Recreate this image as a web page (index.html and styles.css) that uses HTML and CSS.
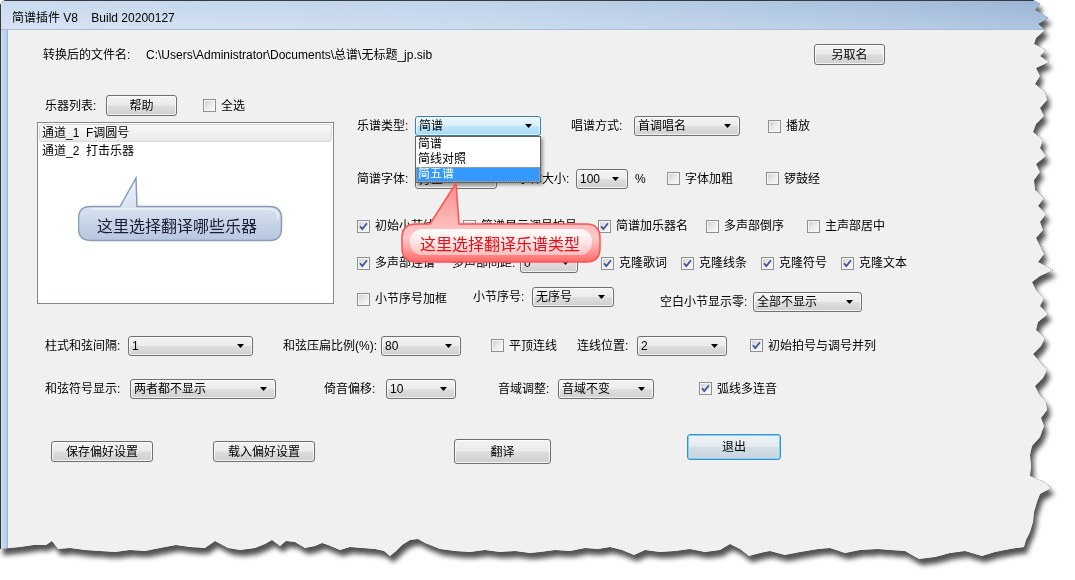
FILE: index.html
```html
<!DOCTYPE html>
<html lang="zh-CN">
<head>
<meta charset="utf-8">
<title>简谱插件 V8</title>
<link rel="stylesheet" href="styles.css">
</head>
<body>
<div class="shot">
 <div class="win">
  <div class="titlebar"><span class="title">简谱插件 V8    Build 20200127</span></div>
  <div class="winbody">
   <div class="frame-l"></div>
   <div class="client">

    <div class="row row-file">
     <span class="lbl w103">转换后的文件名:</span>
     <span class="path w668">C:\Users\Administrator\Documents\总谱\无标题_jp.sib</span>
     <div class="btn w71 h21">另取名</div>
    </div>

    <div class="main">
     <div class="left">
      <div class="row row-inst">
       <span class="lbl w61">乐器列表:</span>
       <div class="btn w71 h21">帮助</div>
       <div class="ck ml26"><span class="box"></span><span class="ckl">全选</span></div>
      </div>
      <div class="listbox">
       <div class="li sel">通道_1  F调圆号</div>
       <div class="li">通道_2  打击乐器</div>
       <div class="callout callout-blue">
        <svg width="214" height="74" viewBox="0 0 214 74">
         <defs>
          <linearGradient id="gb" x1="0" y1="0" x2="0" y2="1">
           <stop offset="0" stop-color="#f1f5fb"/>
           <stop offset="0.45" stop-color="#d9e3f1"/>
           <stop offset="1" stop-color="#b6c6dd"/>
          </linearGradient>
         </defs>
         <path d="M12.5 30.5 L42 30.5 L58 2 L59 30.5 L191.5 30.5 Q203.5 30.5 203.5 42.5 L203.5 52.5 Q203.5 64.5 191.5 64.5 L12.5 64.5 Q0.5 64.5 0.5 52.5 L0.5 42.5 Q0.5 30.5 12.5 30.5 Z" fill="url(#gb)" stroke="#8a9cba" stroke-width="1.5"/>
         <path d="M13 33 L190 33 Q200.5 33 200.5 43" fill="none" stroke="#ffffff" stroke-opacity="0.8" stroke-width="1.2"/>
        </svg>
        <span class="co-text co-text-blue">这里选择翻译哪些乐器</span>
       </div>
      </div>
     </div>

     <div class="right">
      <div class="row r1">
       <span class="lbl w58">乐谱类型:</span>
       <div class="combo focus w126"><span class="cv">简谱</span><svg class="arr" width="7" height="4" viewBox="0 0 7 4"><path d="M0 0H7L3.5 4Z"/></svg>
        <div class="dropdown">
         <div class="dd-item">简谱</div>
         <div class="dd-item">简线对照</div>
         <div class="dd-item hl">简五谱</div>
        </div>
       </div>
       <span class="lbl ml30 w63">唱谱方式:</span>
       <div class="combo w106"><span class="cv">首调唱名</span><svg class="arr" width="7" height="4" viewBox="0 0 7 4"><path d="M0 0H7L3.5 4Z"/></svg></div>
       <div class="ck ml28"><span class="box"></span><span class="ckl">播放</span></div>
      </div>

      <div class="row r2">
       <span class="lbl w58">简谱字体:</span>
       <div class="combo w82 h21"><span class="cv cv-low">方正</span><svg class="arr" width="7" height="4" viewBox="0 0 7 4"><path d="M0 0H7L3.5 4Z"/></svg></div>
       <span class="lbl ml21 w58">字体大小:</span>
       <div class="combo w52"><span class="cv">100</span><svg class="arr" width="7" height="4" viewBox="0 0 7 4"><path d="M0 0H7L3.5 4Z"/></svg></div>
       <span class="lbl ml7 w32">%</span>
       <div class="ck w99"><span class="box"></span><span class="ckl">字体加粗</span></div>
       <div class="ck"><span class="box"></span><span class="ckl">锣鼓经</span></div>
      </div>

      <div class="row r3">
       <div class="ck w106"><span class="box"><svg width="11" height="11" viewBox="0 0 11 11"><path d="M2 5.2 L4.3 8 L9 2.3" class="tick"/></svg></span><span class="ckl">初始小节线</span></div>
       <div class="ck w135"><span class="box"><svg width="11" height="11" viewBox="0 0 11 11"><path d="M2 5.2 L4.3 8 L9 2.3" class="tick"/></svg></span><span class="ckl">简谱显示调号拍号</span></div>
       <div class="ck w108"><span class="box"><svg width="11" height="11" viewBox="0 0 11 11"><path d="M2 5.2 L4.3 8 L9 2.3" class="tick"/></svg></span><span class="ckl">简谱加乐器名</span></div>
       <div class="ck w101"><span class="box"></span><span class="ckl">多声部倒序</span></div>
       <div class="ck"><span class="box"></span><span class="ckl">主声部居中</span></div>
      </div>

      <div class="row r4">
       <div class="ck w95"><span class="box"><svg width="11" height="11" viewBox="0 0 11 11"><path d="M2 5.2 L4.3 8 L9 2.3" class="tick"/></svg></span><span class="ckl">多声部连谱</span></div>
       <span class="lbl w68">多声部间距:</span>
       <div class="combo w58"><span class="cv">0</span><svg class="arr" width="7" height="4" viewBox="0 0 7 4"><path d="M0 0H7L3.5 4Z"/></svg></div>
       <div class="ck ml23 w80"><span class="box"><svg width="11" height="11" viewBox="0 0 11 11"><path d="M2 5.2 L4.3 8 L9 2.3" class="tick"/></svg></span><span class="ckl">克隆歌词</span></div>
       <div class="ck w80"><span class="box"><svg width="11" height="11" viewBox="0 0 11 11"><path d="M2 5.2 L4.3 8 L9 2.3" class="tick"/></svg></span><span class="ckl">克隆线条</span></div>
       <div class="ck w80"><span class="box"><svg width="11" height="11" viewBox="0 0 11 11"><path d="M2 5.2 L4.3 8 L9 2.3" class="tick"/></svg></span><span class="ckl">克隆符号</span></div>
       <div class="ck"><span class="box"><svg width="11" height="11" viewBox="0 0 11 11"><path d="M2 5.2 L4.3 8 L9 2.3" class="tick"/></svg></span><span class="ckl">克隆文本</span></div>
      </div>

      <div class="row r5">
       <div class="ck w116 mt4"><span class="box"></span><span class="ckl">小节序号加框</span></div>
       <span class="lbl w59">小节序号:</span>
       <div class="combo w82"><span class="cv">无序号</span><svg class="arr" width="7" height="4" viewBox="0 0 7 4"><path d="M0 0H7L3.5 4Z"/></svg></div>
       <span class="lbl ml46 w93 mt10">空白小节显示零:</span>
       <div class="combo w109 mt10"><span class="cv">全部不显示</span><svg class="arr" width="7" height="4" viewBox="0 0 7 4"><path d="M0 0H7L3.5 4Z"/></svg></div>
      </div>

      <div class="callout callout-red">
       <svg width="210" height="90" viewBox="0 0 210 90">
        <defs>
         <linearGradient id="gr" x1="0" y1="0" x2="0" y2="1">
          <stop offset="0" stop-color="#ff8c8c"/>
          <stop offset="0.5" stop-color="#ffb9b9"/>
          <stop offset="0.7" stop-color="#ffc9c9"/>
          <stop offset="1" stop-color="#ff6a6a"/>
         </linearGradient>
         <linearGradient id="gr2" x1="0" y1="0" x2="0" y2="1">
          <stop offset="0" stop-color="#ffffff" stop-opacity="0.95"/>
          <stop offset="1" stop-color="#ffe4e4" stop-opacity="0.6"/>
         </linearGradient>
        </defs>
        <path d="M16 44 L30 44 L56 3 L59 44 L186 44 Q200 44 200 58 L200 68 Q200 82 186 82 L16 82 Q2 82 2 68 L2 58 Q2 44 16 44 Z" fill="url(#gr)" stroke="#ff5050" stroke-width="1.5"/>
        <rect x="10" y="49" width="182" height="26" rx="12" fill="url(#gr2)"/>
       </svg>
       <span class="co-text co-text-red">这里选择翻译乐谱类型</span>
      </div>
     </div>
    </div>

    <div class="row b1">
     <span class="lbl w83">柱式和弦间隔:</span>
     <div class="combo w125"><span class="cv">1</span><svg class="arr" width="7" height="4" viewBox="0 0 7 4"><path d="M0 0H7L3.5 4Z"/></svg></div>
     <span class="lbl ml30 w98">和弦压扁比例(%):</span>
     <div class="combo w80"><span class="cv">80</span><svg class="arr" width="7" height="4" viewBox="0 0 7 4"><path d="M0 0H7L3.5 4Z"/></svg></div>
     <div class="ck ml30 w86"><span class="box"></span><span class="ckl">平顶连线</span></div>
     <span class="lbl w60">连线位置:</span>
     <div class="combo w90"><span class="cv">2</span><svg class="arr" width="7" height="4" viewBox="0 0 7 4"><path d="M0 0H7L3.5 4Z"/></svg></div>
     <div class="ck ml23"><span class="box"><svg width="11" height="11" viewBox="0 0 11 11"><path d="M2 5.2 L4.3 8 L9 2.3" class="tick"/></svg></span><span class="ckl">初始拍号与调号并列</span></div>
    </div>

    <div class="row b2">
     <span class="lbl w85">和弦符号显示:</span>
     <div class="combo w146"><span class="cv">两者都不显示</span><svg class="arr" width="7" height="4" viewBox="0 0 7 4"><path d="M0 0H7L3.5 4Z"/></svg></div>
     <span class="lbl ml48 w62">倚音偏移:</span>
     <div class="combo w70"><span class="cv">10</span><svg class="arr" width="7" height="4" viewBox="0 0 7 4"><path d="M0 0H7L3.5 4Z"/></svg></div>
     <span class="lbl ml42 w60">音域调整:</span>
     <div class="combo w96"><span class="cv">音域不变</span><svg class="arr" width="7" height="4" viewBox="0 0 7 4"><path d="M0 0H7L3.5 4Z"/></svg></div>
     <div class="ck ml45"><span class="box"><svg width="11" height="11" viewBox="0 0 11 11"><path d="M2 5.2 L4.3 8 L9 2.3" class="tick"/></svg></span><span class="ckl">弧线多连音</span></div>
    </div>

    <div class="row btns">
     <div class="btn w102 h21 mt7">保存偏好设置</div>
     <div class="btn w102 h21 mt7 ml60">载入偏好设置</div>
     <div class="btn w97 h25 mt5 ml139">翻译</div>
     <div class="btn default w94 h26 ml136">退出</div>
    </div>

   </div>
  </div>
 </div>
</div>
</body>
</html>
```

FILE: styles.css
```css
* { box-sizing: border-box; }
html, body { margin: 0; padding: 0; background: #ffffff; }
body {
  font-family: "Liberation Sans", "Noto Sans CJK SC", sans-serif;
  font-size: 12px;
  line-height: 16px;
  color: #000;
}

.shot {
  width: 1075px;
  height: 580px;
  filter: drop-shadow(0 0 0.6px rgba(0,0,0,0.95)) drop-shadow(3px 6px 2.5px rgba(0,0,0,0.68));
}

.win {
  width: 1060px;
  height: 572px;
  display: flex;
  flex-direction: column;
  background: #f0f0f0;
  border-top: 1px solid #3a3a3a;
  border-left: 1px solid #3a3a3a;
  clip-path: polygon(0px 5px, 2px 2px, 5px 0px, 1033px 0px,
    1040px 4px, 1035px 10px, 1042px 14px, 1048px 18px, 1038px 24px, 1045px 30px, 1036px 38px, 1034px 44px,
    1046px 50px, 1040px 56px, 1049px 62px, 1036px 68px, 1040px 76px, 1035px 84px, 1045px 92px,
    1047px 100px, 1040px 108px, 1044px 116px, 1036px 124px, 1033px 132px, 1043px 140px, 1040px 148px,
    1046px 156px, 1036px 164px, 1040px 172px, 1034px 180px, 1035px 190px, 1044px 198px, 1038px 206px,
    1046px 214px, 1040px 222px, 1043px 230px, 1036px 238px, 1040px 246px, 1044px 254px, 1038px 262px,
    1053px 270px, 1040px 276px, 1032px 282px, 1036px 290px, 1044px 298px, 1040px 306px, 1048px 314px,
    1038px 322px, 1036px 330px, 1045px 338px, 1041px 346px, 1033px 354px, 1040px 362px, 1047px 370px,
    1043px 378px, 1035px 386px, 1039px 394px, 1046px 402px, 1047px 410px, 1041px 418px, 1044px 426px,
    1040px 437px, 1032px 446px, 1030px 455px, 1031px 466px, 1030px 476px, 1044px 482px, 1051px 488px,
    1040px 494px, 1037px 502px, 1034px 512px, 1033px 522px, 1030px 532px, 1026px 540px, 1024px 547px,
    1010px 549px, 995px 552px, 982px 556px, 965px 551px, 950px 553px, 935px 557px, 919px 559px,
    905px 551px, 890px 550px, 878px 549px, 860px 550px, 845px 553px, 830px 548px, 818px 549px,
    800px 552px, 785px 555px, 770px 551px, 760px 553px, 749px 556px, 740px 549px, 730px 544px,
    720px 550px, 705px 552px, 690px 549px, 675px 551px, 660px 552px, 645px 550px, 634px 555px,
    622px 550px, 610px 547px, 598px 549px, 585px 548px, 570px 551px, 555px 550px, 540px 552px,
    530px 553px, 515px 551px, 500px 552px, 485px 550px, 470px 552px, 455px 551px, 440px 549px,
    425px 543px, 418px 539px, 410px 540px, 402px 545px, 395px 552px, 390px 556px, 384px 551px,
    375px 549px, 362px 548px, 350px 547px, 340px 550px, 328px 545px, 322px 543px, 315px 546px,
    305px 548px, 295px 542px, 286px 541px, 280px 546px, 272px 540px, 265px 544px, 255px 548px,
    240px 550px, 228px 548px, 215px 541px, 205px 548px, 190px 547px, 176px 545px, 160px 548px,
    145px 551px, 130px 550px, 115px 552px, 100px 551px, 85px 550px, 70px 548px, 58px 549px,
    52px 541px, 46px 545px, 34px 545px, 20px 547px, 10px 548px, 0px 549px);
}

.titlebar {
  height: 29px;
  flex: none;
  padding: 9px 0 0 11px;
  background:
    linear-gradient(to bottom, rgba(255,255,255,0) 0%, rgba(255,255,255,0.22) 100%),
    linear-gradient(90deg, #cadcf0 0%, #bfd3eb 45%, #a9c2df 80%, #98b4d5 100%);
  border-bottom: 1px solid #a7bdd8;
}
.title { white-space: pre; font-size: 12px; color: #000; }

.winbody { flex: 1; display: flex; min-height: 0; }
.frame-l {
  width: 7px;
  flex: none;
  background: linear-gradient(90deg, #c8dbf0, #b9cfe9);
  border-right: 1px solid #9db4d0;
}
.client {
  flex: 1;
  padding-top: 14px;
  background: #f0f0f0;
}

/* generic row */
.row { display: flex; align-items: center; }
.lbl { flex: none; white-space: nowrap; }

/* buttons */
.btn {
  flex: none;
  display: flex;
  align-items: center;
  justify-content: center;
  border: 1px solid #707070;
  border-radius: 3px;
  background: linear-gradient(#f2f2f2 0%, #ebebeb 48%, #dddddd 52%, #cfcfcf 100%);
  box-shadow: inset 0 0 0 1px rgba(255,255,255,0.75);
  white-space: nowrap;
}
.btn.default {
  border-color: #3c8fcf;
  background: linear-gradient(#eef3f6 0%, #e3eaef 48%, #d3dee5 52%, #c8d5de 100%);
  box-shadow: inset 0 0 0 1px #7fd2f6;
}

/* combo boxes */
.combo {
  position: relative;
  flex: none;
  height: 20px;
  display: flex;
  align-items: center;
  padding-left: 3px;
  border: 1px solid #707070;
  border-radius: 3px;
  background: linear-gradient(#f3f3f3 0%, #ececec 48%, #dedede 52%, #d0d0d0 100%);
  box-shadow: inset 0 0 0 1px rgba(255,255,255,0.7);
}
.combo.focus {
  border-color: #3c7fb1;
  background: linear-gradient(#eaf6fd 0%, #d9f0fc 48%, #bee6fd 52%, #a7d9f5 100%);
}
.cv { flex: 1; white-space: nowrap; overflow: hidden; }
.cv-low { padding-top: 2px; }
.arr { flex: none; margin-right: 8px; fill: #000; }

.dropdown {
  position: absolute;
  left: -1px;
  top: 19px;
  width: 126px;
  background: #fff;
  border: 1px solid #646464;
  box-shadow: 2px 2px 3px rgba(0,0,0,0.35);
  z-index: 5;
}
.dd-item { height: 15px; line-height: 15px; padding-left: 2px; white-space: nowrap; }
.dd-item.hl { background: #3399ff; color: #fff; outline: 1px dotted #e0a050; outline-offset: -1px; }

/* checkboxes */
.ck { flex: none; display: flex; align-items: center; }
.box {
  width: 13px;
  height: 13px;
  flex: none;
  border: 1px solid #8e8f8f;
  background: linear-gradient(135deg, #cdcdcd 0%, #ececec 55%, #fafafa 100%);
  box-shadow: inset 0 0 0 1px #f6f6f6;
  display: flex;
  align-items: center;
  justify-content: center;
}
.tick { fill: none; stroke: #3e539a; stroke-width: 1.8; }
.ckl { margin-left: 5px; white-space: nowrap; }

/* file row */
.row-file { height: 21px; padding-left: 35px; }
.path { white-space: nowrap; }

/* main two column area */
.main { display: flex; align-items: flex-start; margin-top: 30px; }
.left { width: 297px; margin-left: 29px; flex: none; }
.row-inst { height: 21px; padding-left: 8px; }
.listbox {
  position: relative;
  margin-top: 6px;
  width: 297px;
  height: 182px;
  padding: 1px;
  background: #fff;
  border: 1px solid #828790;
}
.li { height: 18px; line-height: 18px; padding-left: 3px; white-space: pre; }
.li.sel {
  line-height: 16px;
  padding-left: 2px;
  border: 1px solid #d9d9d9;
  border-radius: 3px;
  background: linear-gradient(#fafafa, #e8e8e8);
}

.right { position: relative; margin-left: 23px; flex: none; width: 680px; }
.r1 { margin-top: 21px; height: 20px; }
.r2 { margin-top: 32px; height: 21px; }
.r3 { margin-top: 27px; height: 20px; }
.r4 { margin-top: 17px; height: 20px; }
.r5 { margin-top: 14px; height: 20px; }

.b1 { margin-top: 28px; height: 21px; padding-left: 37px; }
.b2 { margin-top: 22px; height: 21px; padding-left: 37px; }
.btns { margin-top: 35px; padding-left: 43px; align-items: flex-start; }

/* callouts */
.callout { position: absolute; }
.callout svg { display: block; }
.callout-blue { left: 40px; top: 53px; }
.callout-red { left: 43px; top: 85px; z-index: 6; }
.co-text { position: absolute; white-space: nowrap; font-family: "Noto Sans CJK SC", sans-serif; font-size: 16px; line-height: 18px; }
.co-text-blue { left: 19px; top: 40px; color: #1c1c38; }
.co-text-red { left: 20px; top: 54px; color: #e3121a; }

/* sizes */
.h21 { height: 21px; }
.h25 { height: 25px; }
.h26 { height: 26px; }
.w32 { width: 32px; } .w52 { width: 52px; } .w58 { width: 58px; } .w59 { width: 59px; }
.w60 { width: 60px; } .w61 { width: 61px; } .w62 { width: 62px; } .w63 { width: 63px; }
.w68 { width: 68px; } .w70 { width: 70px; } .w71 { width: 71px; } .w80 { width: 80px; }
.w82 { width: 82px; } .w83 { width: 83px; } .w85 { width: 85px; } .w86 { width: 86px; }
.w90 { width: 90px; } .w93 { width: 93px; } .w94 { width: 94px; } .w95 { width: 95px; }
.w96 { width: 96px; } .w97 { width: 97px; } .w98 { width: 98px; } .w99 { width: 99px; }
.w101 { width: 101px; } .w102 { width: 102px; } .w103 { width: 103px; } .w106 { width: 106px; }
.w108 { width: 108px; } .w109 { width: 109px; } .w116 { width: 116px; } .w125 { width: 125px; }
.w126 { width: 126px; } .w135 { width: 135px; } .w146 { width: 146px; } .w668 { width: 668px; }

.ml7 { margin-left: 7px; } .ml21 { margin-left: 21px; } .ml23 { margin-left: 23px; }
.ml26 { margin-left: 26px; } .ml28 { margin-left: 28px; } .ml30 { margin-left: 30px; }
.ml42 { margin-left: 42px; } .ml45 { margin-left: 45px; } .ml46 { margin-left: 46px; }
.ml48 { margin-left: 48px; } .ml60 { margin-left: 60px; } .ml136 { margin-left: 136px; }
.ml139 { margin-left: 139px; }
.mt4 { margin-top: 4px; } .mt5 { margin-top: 5px; } .mt7 { margin-top: 7px; } .mt10 { margin-top: 10px; }
```
